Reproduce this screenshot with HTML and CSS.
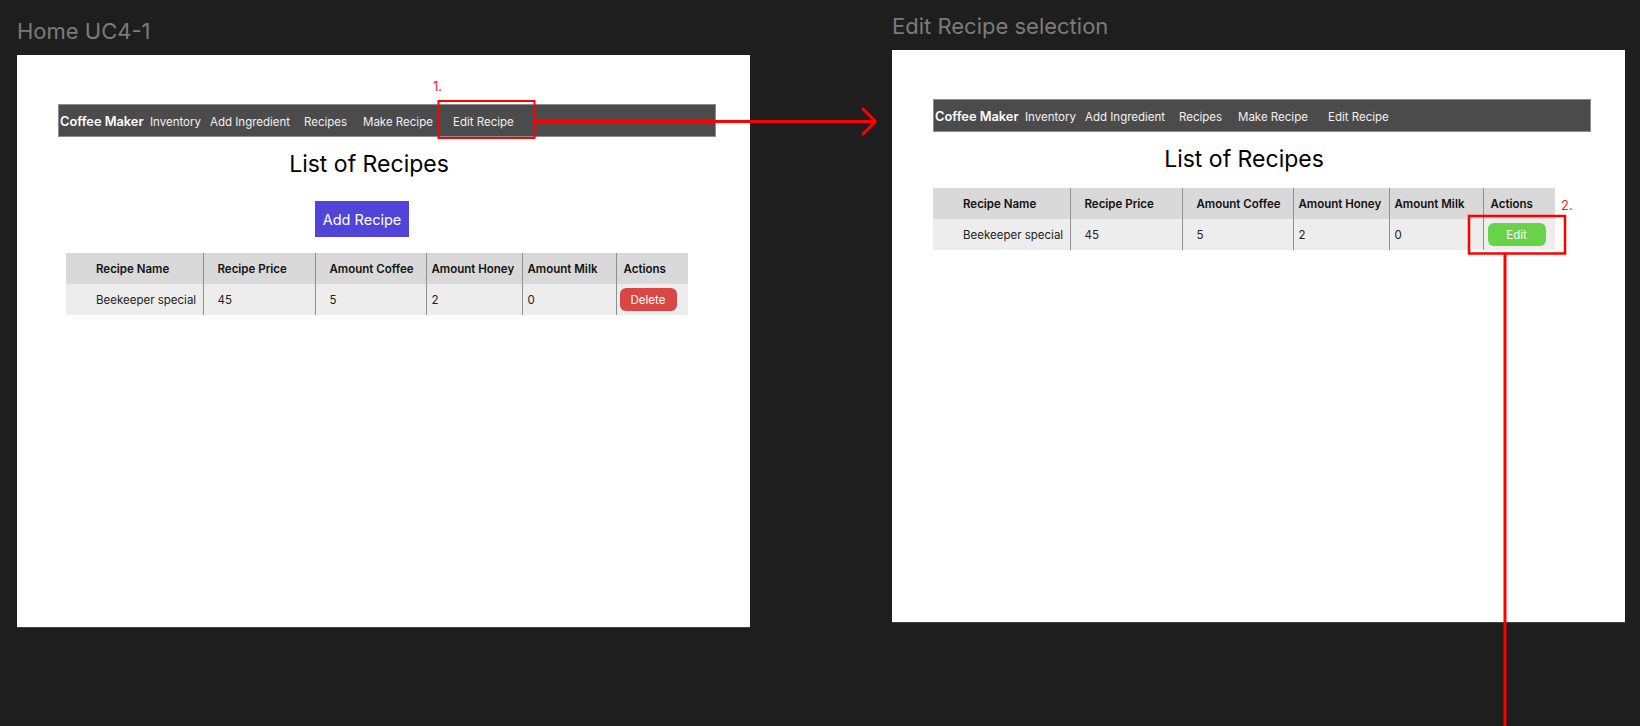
FILE: index.html
```html
<!DOCTYPE html>
<html lang="en">
<head>
<meta charset="utf-8">
<title>Coffee Maker – Edit Recipe flow</title>
<link rel="stylesheet" href="styles.css">
</head>
<body>
<div class="canvas">
  <section class="board board--home">
    <h2 class="board-title">Home UC4-1</h2>
    <div class="frame">
      <nav class="nav">
        <span class="nav-brand">Coffee Maker</span>
        <span class="nav-item nav-inventory">Inventory</span>
        <span class="nav-item nav-add">Add Ingredient</span>
        <span class="nav-item nav-recipes">Recipes</span>
        <span class="nav-item nav-make">Make Recipe</span>
        <span class="nav-item nav-edit">Edit Recipe</span>
      </nav>
      <div class="content">
        <h1 class="page-title">List of Recipes</h1>
        <button class="btn-add">Add Recipe</button>
        <table class="recipes recipes--home">
          <colgroup>
            <col class="c-name"><col class="c-price"><col class="c-coffee"><col class="c-honey"><col class="c-milk"><col class="c-actions">
          </colgroup>
          <thead>
            <tr><th>Recipe Name</th><th>Recipe Price</th><th>Amount Coffee</th><th>Amount Honey</th><th>Amount Milk</th><th>Actions</th></tr>
          </thead>
          <tbody>
            <tr><td>Beekeeper special</td><td>45</td><td>5</td><td>2</td><td>0</td><td><button class="btn-row btn-delete">Delete</button></td></tr>
          </tbody>
        </table>
      </div>
    </div>
  </section>

  <section class="board board--edit">
    <h2 class="board-title">Edit Recipe selection</h2>
    <div class="frame">
      <nav class="nav">
        <span class="nav-brand">Coffee Maker</span>
        <span class="nav-item nav-inventory">Inventory</span>
        <span class="nav-item nav-add">Add Ingredient</span>
        <span class="nav-item nav-recipes">Recipes</span>
        <span class="nav-item nav-make">Make Recipe</span>
        <span class="nav-item nav-edit">Edit Recipe</span>
      </nav>
      <div class="content">
        <h1 class="page-title">List of Recipes</h1>
        <table class="recipes recipes--edit">
          <colgroup>
            <col class="c-name"><col class="c-price"><col class="c-coffee"><col class="c-honey"><col class="c-milk"><col class="c-actions">
          </colgroup>
          <thead>
            <tr><th>Recipe Name</th><th>Recipe Price</th><th>Amount Coffee</th><th>Amount Honey</th><th>Amount Milk</th><th>Actions</th></tr>
          </thead>
          <tbody>
            <tr><td>Beekeeper special</td><td>45</td><td>5</td><td>2</td><td>0</td><td><button class="btn-row btn-edit">Edit</button></td></tr>
          </tbody>
        </table>
      </div>
    </div>
  </section>
</div>

<svg class="annotations" width="1640" height="726" viewBox="0 0 1640 726" xmlns="http://www.w3.org/2000/svg">
  <text class="step-label" x="433" y="91">1.</text>
  <rect x="438.5" y="101" width="96" height="37" fill="none" stroke="#ff0000" stroke-width="2"/>
  <line x1="535" y1="121.5" x2="874" y2="121.5" stroke="#ff0000" stroke-width="3"/>
  <polyline points="863,109 875.5,121.5 863,134" fill="none" stroke="#ff0000" stroke-width="3" stroke-linecap="round" stroke-linejoin="round"/>
  <text class="step-label" x="1561" y="210">2.</text>
  <rect x="1469" y="216" width="96" height="37.5" fill="none" stroke="#ff0000" stroke-width="2.5"/>
  <line x1="1505" y1="254" x2="1505" y2="726" stroke="#ff0000" stroke-width="3"/>
</svg>
</body>
</html>
```

FILE: styles.css
```css
* {
  box-sizing: border-box;
}

body {
  margin: 0;
  width: 1640px;
  height: 726px;
  overflow: hidden;
  position: relative;
  background: #1e1e1e;
  font-family: Inter, "Noto Sans", "Liberation Sans", sans-serif;
}

.canvas {
  display: flex;
  align-items: flex-start;
  gap: 142px;
  padding-left: 17px;
}

.board {
  width: 733px;
  flex: none;
}

.board--home {
  padding-top: 18px;
}

.board--edit {
  padding-top: 13px;
}

.board-title {
  margin: 0 0 10px;
  font-size: 22px;
  line-height: 27px;
  font-weight: 400;
  color: #7b7b7b;
  white-space: nowrap;
}

.frame {
  height: 572px;
  background: #ffffff;
  padding: 49px 0 0 41px;
  box-shadow: 0 1px 0 #3e3e3e;
}

/* navigation bar */
.nav {
  display: flex;
  align-items: center;
  width: 658px;
  height: 33px;
  padding: 2px 0 0 1px;
  background: #4b4b4b;
  border: 1px solid #8d8d8d;
  color: #f1f1f1;
  font-size: 11.5px;
}

.nav > span {
  flex: none;
  white-space: nowrap;
}

.nav-brand {
  width: 90px;
  font-size: 12.8px;
  font-weight: 600;
  color: #ffffff;
}

.nav-inventory { width: 60px; }
.nav-add { width: 94px; }
.nav-recipes { width: 59px; }
.nav-make { width: 90px; }

/* page content */
.content {
  width: 622px;
}

.page-title {
  margin: 13px 0 0;
  font-size: 23px;
  line-height: 28px;
  font-weight: 400;
  text-align: center;
  color: #000000;
}

.btn-add {
  display: block;
  width: 94px;
  height: 36px;
  margin: 23px 0 0 257px;
  padding: 0;
  border: 0;
  background: #5045d8;
  color: #ffffff;
  font-family: Inter, "Noto Sans", sans-serif;
  font-size: 14.5px;
}

.recipes {
  width: 622px;
  table-layout: fixed;
  border-collapse: collapse;
  font-size: 11.5px;
}

.recipes--home {
  margin: 16px 0 0 8px;
}

.recipes--edit {
  margin-top: 15px;
}

.c-name { width: 137px; }
.c-price { width: 112px; }
.c-coffee { width: 111px; }
.c-honey { width: 96px; }
.c-milk { width: 94px; }
.c-actions { width: 72px; }

.recipes th,
.recipes td {
  height: 31px;
  padding: 0;
  text-align: left;
  vertical-align: middle;
  white-space: nowrap;
}

.recipes th {
  background: #d9d9d9;
  font-weight: 600;
  color: #111111;
}

.recipes td {
  background: #ededed;
  color: #222222;
}

.recipes th + th,
.recipes td + td {
  border-left: 1px solid #8f8f8f;
}

.recipes th:nth-child(1),
.recipes td:nth-child(1) { padding-left: 30px; }
.recipes th:nth-child(2),
.recipes td:nth-child(2) { padding-left: 14px; }
.recipes th:nth-child(3),
.recipes td:nth-child(3) { padding-left: 14px; }
.recipes th:nth-child(4),
.recipes td:nth-child(4) { padding-left: 5px; }
.recipes th:nth-child(5),
.recipes td:nth-child(5) { padding-left: 5px; }
.recipes th:nth-child(6) { padding-left: 7px; }

.btn-row {
  display: block;
  width: 57px;
  height: 23px;
  padding: 0;
  border: 0;
  border-radius: 6px;
  color: #ffffff;
  font-family: Inter, "Noto Sans", sans-serif;
  font-size: 11.5px;
}

.btn-delete {
  margin-left: 3px;
  background: #da4646;
}

.btn-edit {
  margin-left: 4px;
  width: 58px;
  background: #67d34b;
}

/* red annotation overlay */
.annotations {
  position: absolute;
  top: 0;
  left: 0;
  pointer-events: none;
}

.step-label {
  fill: #ff1a1a;
  font-family: Inter, "Noto Sans", sans-serif;
  font-size: 13px;
}
```
